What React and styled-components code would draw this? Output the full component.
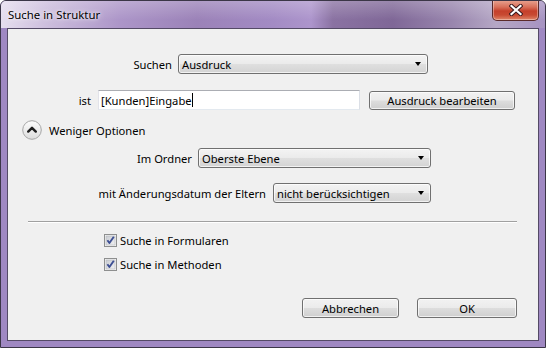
import React from "react";
import styled, { createGlobalStyle } from "styled-components";

const Global = createGlobalStyle`
  html, body { margin: 0; padding: 0; width: 546px; height: 348px; overflow: hidden; background: #ffffff; }
  #root { width: 546px; height: 348px; }
  * { box-sizing: border-box; }
`;

const FONT = `"Segoe UI", "Noto Sans", "Open Sans", sans-serif`;

const Window = styled.div`
  width: 546px;
  height: 348px;
  border: 1px solid #3b3647;
  border-radius: 6px 6px 0 0;
  overflow: hidden;
  display: flex;
  flex-direction: column;
  background: #9f88c2;
  font-family: ${FONT};
  font-size: 11.2px;
  color: #000;
`;

const TitleBar = styled.div`
  height: 27px;
  flex: none;
  display: flex;
  align-items: flex-start;
  padding-left: 7px;
  background:
    linear-gradient(180deg, rgba(255,255,255,0.22) 0%, rgba(255,255,255,0) 70%),
    linear-gradient(90deg, #e6deee 0%, #cbbcdc 9%, #ac95c8 22%, #9b82b8 36%, #a38bc4 50%, #ad95cc 57%, #8a72a2 61%, #7f6797 72%, #9986ae 83%, #b5a7c5 91%, #a793c2 100%);
`;

const Title = styled.span`
  margin-top: 5px;
  line-height: 18px;
  font-size: 11.4px;
  color: #000;
  text-shadow: 0 0 6px rgba(255,255,255,0.9), 0 0 3px rgba(255,255,255,0.8);
`;

const CloseButton = styled.div`
  margin-left: auto;
  margin-right: 6px;
  margin-top: -1px;
  width: 47px;
  height: 21px;
  border: 1px solid #5b2a2a;
  border-top: none;
  border-radius: 0 0 5px 5px;
  display: flex;
  align-items: center;
  justify-content: center;
  background: linear-gradient(180deg, #e9a593 0%, #d8705a 35%, #c5402b 55%, #c84a32 75%, #e0876a 100%);
  box-shadow: inset 0 0 0 1px rgba(255,255,255,0.35);
`;

const Frame = styled.div`
  flex: 1;
  display: flex;
  padding: 0 6px 6px 6px;
  min-height: 0;
`;

const Client = styled.div`
  flex: 1;
  border: 1px solid #544a66;
  background: #f0f0f0;
  display: flex;
  flex-direction: column;
`;

const Row = styled.div`
  display: flex;
  align-items: center;
  height: ${(p) => p.$h || 20}px;
  margin-top: ${(p) => p.$mt}px;
  padding-left: ${(p) => p.$pl || 0}px;
  flex: none;
`;

const Label = styled.div`
  width: ${(p) => p.$w}px;
  margin-right: ${(p) => p.$gap}px;
  text-align: right;
  white-space: nowrap;
  flex: none;
`;

const Combo = styled.div`
  width: ${(p) => p.$w}px;
  height: 20px;
  border: 1px solid #707070;
  border-radius: 3px;
  display: flex;
  align-items: center;
  padding: 0 6px 0 3px;
  background: linear-gradient(180deg, #f3f3f3 0%, #ebebeb 48%, #dfdfdf 52%, #d3d3d3 100%);
  box-shadow: inset 0 0 0 1px rgba(255,255,255,0.7);
  flex: none;
`;

const ComboText = styled.span`
  flex: 1;
  white-space: nowrap;
`;

const Arrow = styled.span`
  width: 0;
  height: 0;
  border-left: 3.5px solid transparent;
  border-right: 3.5px solid transparent;
  border-top: 4px solid #000;
`;

const TextField = styled.div`
  width: ${(p) => p.$w}px;
  height: 20px;
  border: 1px solid;
  border-color: #abadb3 #dbdfe6 #e3e9ef #e2e3ea;
  background: #fff;
  display: flex;
  align-items: center;
  padding-left: 2px;
  white-space: nowrap;
  flex: none;
`;

const Caret = styled.span`
  display: inline-block;
  width: 1px;
  height: 14px;
  background: #000;
`;

const Button = styled.div`
  width: ${(p) => p.$w}px;
  height: ${(p) => p.$h || 20}px;
  margin-left: ${(p) => p.$ml || 0}px;
  border: 1px solid #707070;
  border-radius: 3px;
  display: flex;
  align-items: center;
  justify-content: center;
  background: linear-gradient(180deg, #f2f2f2 0%, #ebebeb 48%, #dddddd 52%, #cfcfcf 100%);
  box-shadow: inset 0 0 0 1px rgba(255,255,255,0.7);
  white-space: nowrap;
  flex: none;
`;

const ToggleIcon = styled.div`
  width: 20px;
  height: 20px;
  margin-right: 7px;
  flex: none;
  display: flex;
`;

const Separator = styled.div`
  margin: 18px 21px 0 20px;
  height: 2px;
  border-top: 1px solid #a0a0a0;
  border-bottom: 1px solid #ffffff;
  flex: none;
`;

const Check = styled.div`
  width: 13px;
  height: 13px;
  margin-right: 3px;
  display: flex;
  flex: none;
`;

const ButtonRow = styled(Row)`
  justify-content: flex-end;
  padding-right: 21px;
`;

function CheckBox() {
  return (
    <Check>
      <svg width="13" height="13" viewBox="0 0 13 13">
        <defs>
          <linearGradient id="cbg" x1="0" y1="0" x2="1" y2="1">
            <stop offset="0" stopColor="#c9ccd2" />
            <stop offset="1" stopColor="#f1f1f2" />
          </linearGradient>
        </defs>
        <rect x="0.5" y="0.5" width="12" height="12" fill="#f4f4f4" stroke="#8e8f8f" />
        <rect x="2" y="2" width="9" height="9" fill="url(#cbg)" stroke="#b4b7bd" strokeWidth="0.6" />
        <path d="M3.4 6.3 L5.4 9 L9.8 2.8" fill="none" stroke="#3d4f93" strokeWidth="1.9" strokeLinejoin="round" />
      </svg>
    </Check>
  );
}

function Toggle() {
  return (
    <ToggleIcon>
      <svg width="20" height="20" viewBox="0 0 20 20">
        <defs>
          <linearGradient id="tg" x1="0" y1="0" x2="0" y2="1">
            <stop offset="0" stopColor="#fdfdfd" />
            <stop offset="1" stopColor="#dcdcdc" />
          </linearGradient>
        </defs>
        <circle cx="10" cy="10" r="9.3" fill="url(#tg)" stroke="#a6a6a6" strokeWidth="1" />
        <path d="M6.2 11.6 L10 7.8 L13.8 11.6" fill="none" stroke="#1e1e1e" strokeWidth="2.4" strokeLinecap="round" strokeLinejoin="round" />
      </svg>
    </ToggleIcon>
  );
}

export default function App() {
  return (
    <>
      <Global />
      <Window>
        <TitleBar>
          <Title>Suche in Struktur</Title>
          <CloseButton>
            <svg width="14" height="12" viewBox="0 0 14 12">
              <path d="M2.5 2 L11.5 10 M11.5 2 L2.5 10" stroke="#3a1a1e" strokeWidth="4.2" strokeLinecap="square" />
              <path d="M2.5 2 L11.5 10 M11.5 2 L2.5 10" stroke="#ffffff" strokeWidth="2.2" strokeLinecap="square" />
            </svg>
          </CloseButton>
        </TitleBar>
        <Frame>
          <Client>
            <Row $mt={25}>
              <Label $w={164} $gap={6}>Suchen</Label>
              <Combo $w={250}>
                <ComboText>Ausdruck</ComboText>
                <Arrow />
              </Combo>
            </Row>
            <Row $mt={16}>
              <Label $w={83} $gap={7}>ist</Label>
              <TextField $w={262}>
                [Kunden]Eingabe<Caret />
              </TextField>
              <Button $w={146} $h={19} $ml={9}>Ausdruck bearbeiten</Button>
            </Row>
            <Row $mt={10} $pl={14}>
              <Toggle />
              <span>Weniger Optionen</span>
            </Row>
            <Row $mt={8}>
              <Label $w={184} $gap={6}>Im Ordner</Label>
              <Combo $w={233}>
                <ComboText>Oberste Ebene</ComboText>
                <Arrow />
              </Combo>
            </Row>
            <Row $mt={15}>
              <Label $w={258} $gap={7}>mit Änderungsdatum der Eltern</Label>
              <Combo $w={158}>
                <ComboText>nicht berücksichtigen</ComboText>
                <Arrow />
              </Combo>
            </Row>
            <Separator />
            <Row $mt={9} $h={16} $pl={96}>
              <CheckBox />
              <span>Suche in Formularen</span>
            </Row>
            <Row $mt={8} $h={16} $pl={96}>
              <CheckBox />
              <span>Suche in Methoden</span>
            </Row>
            <ButtonRow $mt={26}>
              <Button $w={97}>Abbrechen</Button>
              <Button $w={100} $ml={18}>OK</Button>
            </ButtonRow>
          </Client>
        </Frame>
      </Window>
    </>
  );
}
